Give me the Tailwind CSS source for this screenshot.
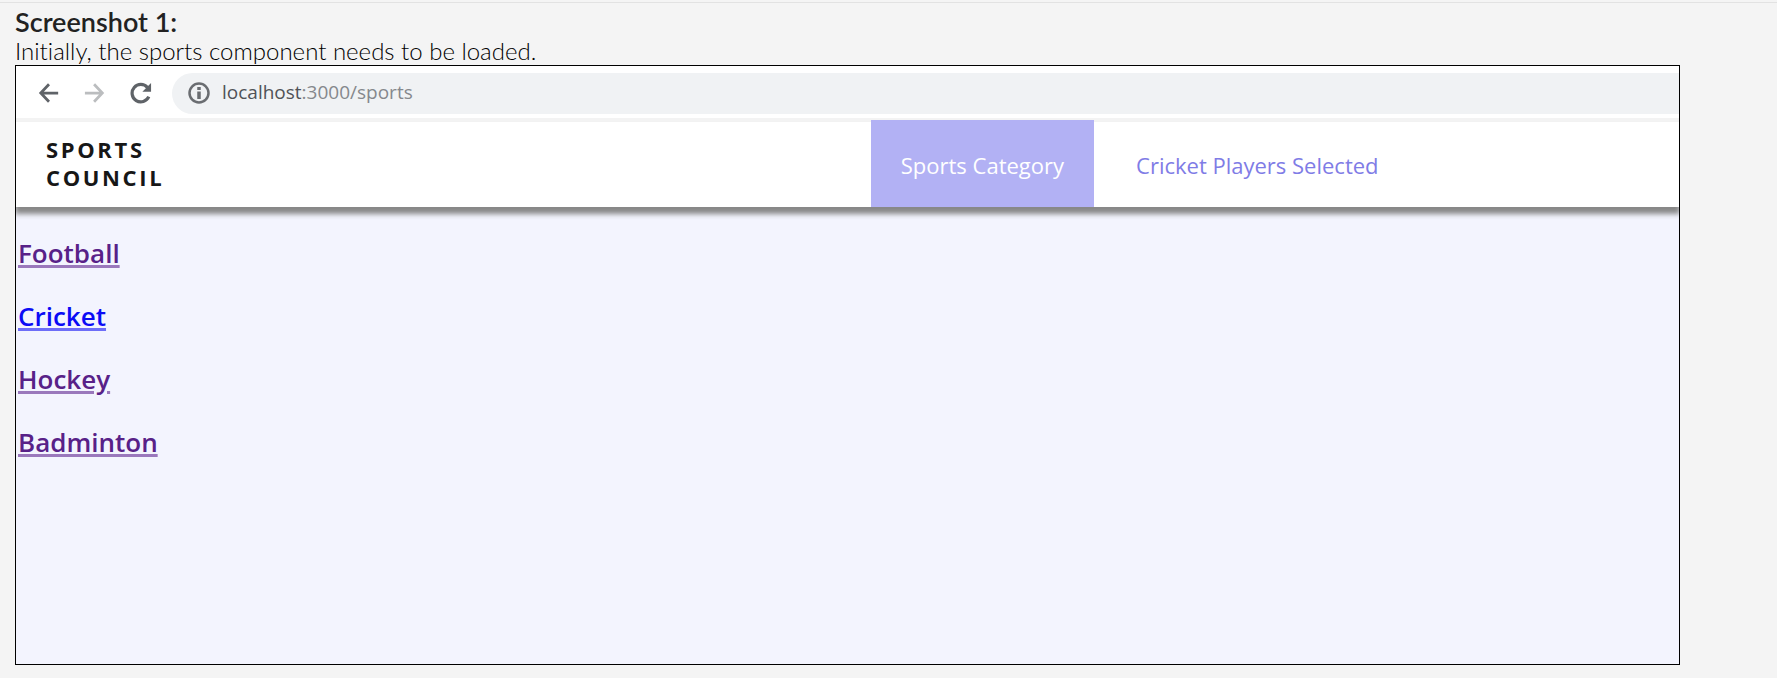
<!DOCTYPE html>
<html lang="en">
<head>
<meta charset="utf-8">
<meta name="viewport" content="width=device-width, initial-scale=1">
<title>Sports Council</title>
<script src="https://cdn.jsdelivr.net/npm/@tailwindcss/browser@4"></script>
</head>
<body class="flex min-h-screen flex-col bg-[#f4f4f4] pr-[97px] pb-[13px] pl-[15px] font-['Lato',sans-serif] text-2xl text-[#222]">
  <hr class="-mr-[97px] -ml-[15px] border-t border-[#e2e2e2] mt-0.5 mb-[5px]">
  <h1 class="text-[27px] leading-7 font-semibold">Screenshot 1:</h1>
  <p class="leading-[29px] font-light text-black [font-variant-ligatures:none]">Initially, the sports component needs to be loaded.</p>
  <section class="flex flex-1 flex-col overflow-hidden border border-black bg-[#f3f4fe] font-['Open_Sans',sans-serif]">
    <div class="flex h-14 items-center border-b-4 border-[#f3f3f3] bg-white pt-0.5 pl-[22px]">
      <button type="button" aria-label="Back" class="mr-6 text-[#5f6368]">
        <svg class="size-[22px]" viewBox="0 0 24 24" fill="none" stroke="currentColor" stroke-width="3"><path d="M22 12H4M12 2.500 3 12l9 9.500"/></svg>
      </button>
      <button type="button" aria-label="Forward" class="mr-6 text-[#bbbdbf]">
        <svg class="size-[22px]" viewBox="0 0 24 24" fill="none" stroke="currentColor" stroke-width="3"><path d="M1 12h18M11 2.500l9 9.500-9 9.500"/></svg>
      </button>
      <button type="button" aria-label="Reload" class="mr-5 text-[#5f6368]">
        <svg class="size-[22px]" viewBox="0 0 24 24" fill="none" stroke="currentColor" stroke-width="3.500"><path d="M20.500 16A9.500 9.500 0 1 1 19 6"/><path d="M23 1v9.500H13.500z" fill="currentColor" stroke="none"/></svg>
      </button>
      <div class="flex h-[41px] flex-1 items-center gap-3 rounded-l-full bg-[#f0f2f4] pl-4">
        <svg class="size-[22px]" viewBox="0 0 22 22" fill="none" stroke="#6a6d71" stroke-width="2.500" aria-hidden="true"><circle cx="11" cy="11" r="9.500"/><path d="M11 9.500V17M11 5v3" stroke-width="3.500"/></svg>
        <a href="#" class="text-[19px] text-[#85888c]"><span class="text-[#505357]">localhost</span>:3000/sports</a>
      </div>
    </div>
    <header class="relative flex h-[85px] bg-white shadow-[0_6px_5px_1px_#888]">
      <div class="flex basis-[51.4%] items-center pb-1 pl-[30px]">
        <strong class="text-[22px] leading-7 font-bold tracking-[0.12em] text-[#171717]">SPORTS<br>COUNCIL</strong>
      </div>
      <nav class="-mt-0.5 flex gap-3 text-[22px] text-[#7f7ce6]">
        <a href="#" class="flex items-center bg-[#b2b1f4] px-[30px] pt-1 text-white">Sports Category</a>
        <a href="#" class="flex items-center px-[30px] pt-1">Cricket Players Selected</a>
      </nav>
    </header>
    <ul class="flex flex-col gap-[31px] pt-[30px] pl-0.5 text-[26px] leading-8 font-semibold text-[#582188]">
      <li><a href="#" class="underline decoration-[#9a78bc] decoration-3">Football</a></li>
      <li><a href="#" class="text-[#0b0bf5] underline decoration-[#6d6df8] decoration-3">Cricket</a></li>
      <li><a href="#" class="underline decoration-[#9a78bc] decoration-3">Hockey</a></li>
      <li><a href="#" class="underline decoration-[#9a78bc] decoration-3">Badminton</a></li>
    </ul>
  </section>
</body>
</html>
